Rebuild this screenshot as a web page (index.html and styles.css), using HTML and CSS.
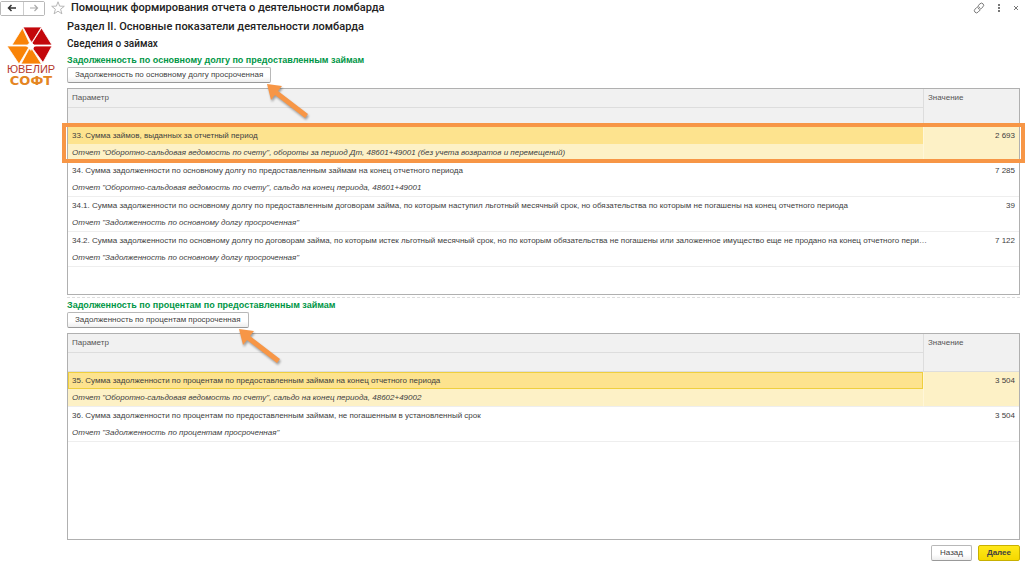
FILE: index.html
```html
<!DOCTYPE html>
<html lang="ru">
<head>
<meta charset="utf-8">
<title>Помощник формирования отчета о деятельности ломбарда</title>
<link rel="stylesheet" href="styles.css">
</head>
<body>
<div class="window">
  <header class="topbar">
    <div class="nav">
      <button class="nav-btn" aria-label="Назад по истории"><svg width="10" height="8" viewBox="0 0 10 8"><path d="M9 4H2M4.500 1L1.500 4l3 3" fill="none" stroke="#333" stroke-width="1.500"/></svg></button>
      <button class="nav-btn" aria-label="Вперед по истории"><svg width="10" height="8" viewBox="0 0 10 8"><path d="M1 4h7M5.500 1l3 3-3 3" fill="none" stroke="#aaa" stroke-width="1.200"/></svg></button>
    </div>
    <button class="icon-btn" aria-label="Избранное"><svg width="14" height="14" viewBox="0 0 14 14"><path d="M7 .8l1.600 4.300 4.700.2-3.700 2.900 1.300 4.600L7 10.200l-3.900 2.600 1.300-4.600L.7 5.300l4.700-.2z" fill="#fff" stroke="#b0b0b0" stroke-width=".9"/></svg></button>
    <h1 class="title">Помощник формирования отчета о деятельности ломбарда</h1>
    <div class="tools">
      <button class="icon-btn" aria-label="Ссылка"><svg width="12" height="12" viewBox="0 0 12 12"><g fill="none" stroke="#777" stroke-width="1" stroke-linecap="round"><path d="M5 3.800l2-2a2.100 2.100 0 0 1 3 3L8.200 6.600a2 2 0 0 1-2.900 0"/><path d="M7 8.200l-2 2a2.100 2.100 0 0 1-3-3l1.800-1.800a2 2 0 0 1 2.900 0"/></g></svg></button>
      <button class="icon-btn" aria-label="Еще"><svg width="4" height="10" viewBox="0 0 4 10"><path d="M1 1h2v2H1zM1 4h2v2H1zM1 7h2v2H1z" fill="#777"/></svg></button>
      <button class="icon-btn" aria-label="Закрыть"><svg width="6" height="6" viewBox="0 0 6 6"><path d="M1 1l4 4M5 1L1 5" stroke="#777" stroke-width="1"/></svg></button>
    </div>
  </header>
  <div class="body">
    <aside class="brand">
      <svg class="logo" width="60" height="64" viewBox="0 0 60 64" role="img" aria-label="Ювелир Софт">
        <g stroke="#fff" stroke-width=".8" stroke-linejoin="round">
          <path d="M23 3h18.500L31.500 19z" fill="#c3070b"/>
          <path d="M41.500 4L52 21H34l-2-2z" fill="#c3070b"/>
          <path d="M34 22h18l-9 16.500L33 25z" fill="#c3070b"/>
          <path d="M22.500 4L29.500 19l-2 2H12z" fill="#f98307"/>
          <path d="M7 22h20.500l1 2L19 40z" fill="#f98307"/>
          <path d="M29 25h3l9.500 15H21z" fill="#f98307"/>
        </g>
        <path d="M31 16l1 4 4 2-4 1.500-1 4-1.500-4-4-1.500 4-2z" fill="#fff"/>
        <text class="logo-top" x="31" y="49" text-anchor="middle">ЮВЕЛИР</text>
        <text class="logo-bottom" x="31" y="61" text-anchor="middle">СОФТ</text>
      </svg>
    </aside>
    <main class="content">
      <h2 class="heading">Раздел II. Основные показатели деятельности ломбарда</h2>
      <h3 class="subheading">Сведения о займах</h3>

      <section class="group">
        <h4 class="group-title">Задолженность по основному долгу по предоставленным займам</h4>
        <div class="command">
          <button class="btn">Задолженность по основному долгу просроченная</button>
          <svg class="arrow" width="46" height="40" viewBox="0 0 46 40" aria-hidden="true"><path d="M1 1l15 2-4 5 30 23-3 4L9 12l-4 5z" fill="#f79646"/></svg>
        </div>
        <div class="grid">
          <table>
            <colgroup><col><col class="col-value"></colgroup>
            <thead>
              <tr><th>Параметр</th><th rowspan="2">Значение</th></tr>
              <tr><th></th></tr>
            </thead>
            <tbody class="selected marked">
              <tr><td class="name">33. Сумма займов, выданных за отчетный период</td><td class="value" rowspan="2">2 693</td></tr>
              <tr><td class="note">Отчет "Оборотно-сальдовая ведомость по счету", обороты за период Дт, 48601+49001 (без учета возвратов и перемещений)</td></tr>
            </tbody>
            <tbody>
              <tr><td class="name">34. Сумма задолженности по основному долгу по предоставленным займам на конец отчетного периода</td><td class="value" rowspan="2">7 285</td></tr>
              <tr><td class="note">Отчет "Оборотно-сальдовая ведомость по счету", сальдо на конец периода, 48601+49001</td></tr>
            </tbody>
            <tbody>
              <tr><td class="name">34.1. Сумма задолженности по основному долгу по предоставленным договорам займа, по которым наступил льготный месячный срок, но обязательства по которым не погашены на конец отчетного периода</td><td class="value" rowspan="2">39</td></tr>
              <tr><td class="note">Отчет "Задолженность по основному долгу просроченная"</td></tr>
            </tbody>
            <tbody>
              <tr><td class="name">34.2. Сумма задолженности по основному долгу по договорам займа, по которым истек льготный месячный срок, но по которым обязательства не погашены или заложенное имущество еще не продано на конец отчетного пери…</td><td class="value" rowspan="2">7 122</td></tr>
              <tr><td class="note">Отчет "Задолженность по основному долгу просроченная"</td></tr>
            </tbody>
          </table>
        </div>
      </section>

      <section class="group split">
        <h4 class="group-title">Задолженность по процентам по предоставленным займам</h4>
        <div class="command">
          <button class="btn">Задолженность по процентам просроченная</button>
          <svg class="arrow" width="46" height="40" viewBox="0 0 46 40" aria-hidden="true"><path d="M1 1l15 2-4 5 30 23-3 4L9 12l-4 5z" fill="#f79646"/></svg>
        </div>
        <div class="grid">
          <table>
            <colgroup><col><col class="col-value"></colgroup>
            <thead>
              <tr><th>Параметр</th><th rowspan="2">Значение</th></tr>
              <tr><th></th></tr>
            </thead>
            <tbody class="selected focused">
              <tr><td class="name">35. Сумма задолженности по процентам по предоставленным займам на конец отчетного периода</td><td class="value" rowspan="2">3 504</td></tr>
              <tr><td class="note">Отчет "Оборотно-сальдовая ведомость по счету", сальдо на конец периода, 48602+49002</td></tr>
            </tbody>
            <tbody>
              <tr><td class="name">36. Сумма задолженности по процентам по предоставленным займам, не погашенным в установленный срок</td><td class="value" rowspan="2">3 504</td></tr>
              <tr><td class="note">Отчет "Задолженность по процентам просроченная"</td></tr>
            </tbody>
          </table>
        </div>
      </section>

      <footer class="actions">
        <button class="btn">Назад</button>
        <button class="btn primary">Далее</button>
      </footer>
    </main>
  </div>
</div>
</body>
</html>
```
FILE: styles.css
```css
* { box-sizing: border-box; }

body {
  margin: 0;
  background: #fff;
  color: #404040;
  font-family: "Liberation Sans", Arial, sans-serif;
  font-size: 8px;
}

h1, h2, h3, h4 { margin: 0; font-weight: 400; }

button { font-family: inherit; margin: 0; }

svg { display: block; }

.window {
  display: flex;
  flex-direction: column;
  min-height: 100vh;
}

.topbar {
  display: flex;
  align-items: center;
  height: 16px;
  padding-right: 6px;
}

.nav {
  display: flex;
  height: 15px;
  border: 1px solid #b8b8b8;
  border-radius: 2px;
  margin-right: 6px;
}

.nav-btn {
  display: flex;
  align-items: center;
  justify-content: center;
  width: 22px;
  padding: 0;
  border: 0;
  background: #fff;
}

.nav-btn + .nav-btn { width: 21px; border-left: 1px solid #ccc; }

.icon-btn { padding: 0; border: 0; background: none; }

.title,
.heading,
.subheading {
  color: #222;
  font-family: Roboto, "Liberation Sans", sans-serif;
  font-size: 11px;
  font-weight: 500;
  line-height: 16px;
}

.title {
  flex: 1;
  margin-left: 6px;
}

.subheading {
  margin: 1px 0;
  font-size: 10px;
}

.tools { display: flex; align-items: center; gap: 12px; }

.body { display: flex; flex: 1; }

.brand { flex: none; width: 67px; padding-top: 8px; }

.logo-top {
  fill: #b5382b;
  font-size: 11px;
}

.logo-bottom {
  fill: #e48522;
  font-family: "DejaVu Sans", sans-serif;
  font-size: 13px;
  font-weight: 700;
}

.content {
  display: flex;
  flex: 1;
  flex-direction: column;
  min-width: 0;
  padding: 3px 5px 0 0;
}

.group {
  display: flex;
  flex: 1;
  flex-direction: column;
}

.split {
  margin-top: 2px;
  border-top: 1px dashed #ddd;
}

.group-title {
  color: #009646;
  font-size: 9px;
  font-weight: 700;
  line-height: 14px;
}

.command {
  position: relative;
  align-self: flex-start;
  margin-bottom: 5px;
}

.btn {
  display: block;
  height: 16px;
  padding: 0 7px;
  border: 1px solid #b8b8b8;
  border-bottom-color: #999;
  border-radius: 2px;
  background: linear-gradient(#fff 60%, #eee);
  color: #404040;
  font-size: 8px;
  line-height: 14px;
}

.arrow {
  position: absolute;
  top: 100%;
  left: 100%;
  z-index: 2;
  margin-left: -5px;
  filter: drop-shadow(1px 2px 1px rgba(0, 0, 0, .35));
}

.split .arrow { margin-left: -11px; }

.grid {
  flex: 1;
  border: 1px solid #b0b0b0;
}

table {
  width: 100%;
  table-layout: fixed;
  border-collapse: separate;
  border-spacing: 0;
}

.col-value { width: 96px; }

th {
  height: 19px;
  padding: 0 4px;
  border-bottom: 1px solid #ddd;
  background: #f1f1f1;
  color: #555;
  font-weight: 400;
  line-height: 17px;
  text-align: left;
  vertical-align: top;
}

th[rowspan] { border-left: 1px solid #ddd; }

tbody { position: relative; }

td {
  height: 17px;
  padding: 0 4px;
  line-height: 16px;
}

.name, .note { white-space: nowrap; }

.note {
  height: 18px;
  border-bottom: 1px solid #eee;
  font-style: italic;
}

.value {
  padding-top: 1px;
  border-bottom: 1px solid #eee;
  text-align: right;
  vertical-align: top;
}

.selected td { background: #fdf1c6; }
.selected .name { background: #fde38e; }
.selected .value { border-left: 1px solid #fff6d8; }

.focused .name { box-shadow: inset 0 0 0 1px #efcf3e; }

.marked::after {
  content: "";
  position: absolute;
  inset: -4px -6px -1px -6px;
  border: 4px solid #f79646;
}

.actions {
  display: flex;
  justify-content: flex-end;
  gap: 6px;
  padding: 5px 0 1px;
}

.actions .btn { padding: 0 8px; }

.primary {
  border-color: #c8b000;
  background: linear-gradient(#ffe81a, #f5d800);
  font-weight: 700;
}
```
